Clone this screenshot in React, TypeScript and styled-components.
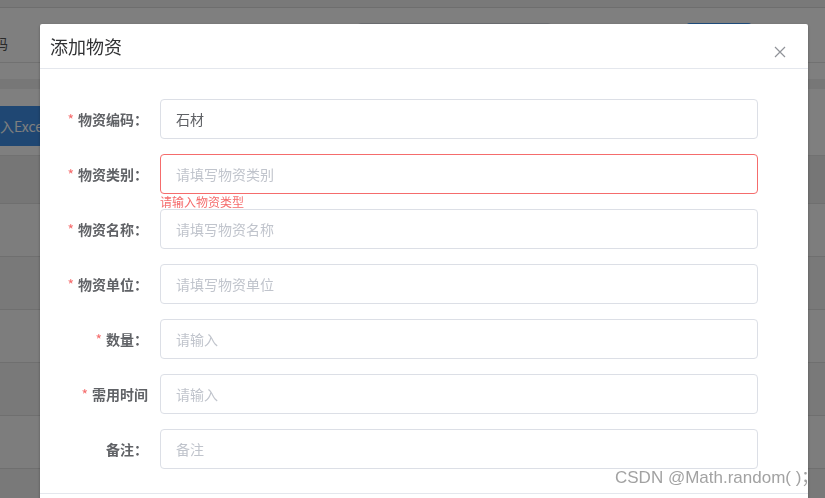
import React from "react";
import styled, { createGlobalStyle } from "styled-components";

const GlobalStyle = createGlobalStyle`
  html, body {
    margin: 0;
    padding: 0;
    height: 100%;
    overflow: hidden;
  }
  body {
    font-family: "Noto Sans CJK SC", "Noto Sans", sans-serif;
    background: #ffffff;
  }
  * {
    box-sizing: border-box;
  }
`;

/* ---------- page behind the modal ---------- */

const Page = styled.div`
  height: 100vh;
  background: #ffffff;
  overflow: hidden;
`;

const TopStrip = styled.div`
  height: 8px;
  background: #f3f3f3;
  border-bottom: 1px solid #dcdcdc;
`;

const SearchRow = styled.div`
  display: flex;
  align-items: flex-start;
  height: 55px;
  padding-top: 15px;
  border-bottom: 1px solid #e2e2e2;
`;

const SearchLabel = styled.span`
  margin-left: -20px;
  width: 28px;
  line-height: 40px;
  font-size: 14px;
  color: #555;
  white-space: nowrap;
`;

const SearchInput = styled.div`
  margin-left: 349px;
  width: 195px;
  height: 40px;
  border: 1px solid #dcdfe6;
  border-radius: 4px;
`;

const SearchButton = styled.div`
  margin-left: 134px;
  width: 66px;
  height: 40px;
  border-radius: 4px;
  background: #409eff;
`;

const Spacer = styled.div`
  height: 16px;
`;

const GrayBand = styled.div`
  height: 10px;
  background: #eeeeee;
`;

const Toolbar = styled.div`
  display: flex;
  align-items: flex-start;
  height: 67px;
  padding-top: 17px;
  border-bottom: 1px solid #e2e2e2;
`;

const PrimaryButton = styled.div`
  margin-left: -34px;
  height: 40px;
  padding: 0 20px;
  line-height: 40px;
  border-radius: 4px;
  background: #3f8fe6;
  color: #ffffff;
  font-family: "Noto Sans CJK SC", "Open Sans", sans-serif;
  font-size: 14px;
  white-space: nowrap;
`;

const TableHead = styled.div`
  height: 48px;
  background: #ececec;
  border-bottom: 1px solid #dedede;
`;

const TableRow = styled.div<{ $striped: boolean }>`
  height: 53px;
  background: ${(p) => (p.$striped ? "#f2f2f2" : "#fafafa")};
  border-bottom: 1px solid #dedede;
`;

/* ---------- modal ---------- */

const Mask = styled.div`
  position: fixed;
  inset: 0;
  background: rgba(0, 0, 0, 0.5);
  overflow: hidden;
`;

const Dialog = styled.div`
  position: relative;
  margin: 24px 0 0 40px;
  width: 768px;
  background: #ffffff;
  border-radius: 2px;
  box-shadow: 0 1px 3px rgba(0, 0, 0, 0.3);
`;

const DialogHeader = styled.div`
  height: 45px;
  padding: 10px;
  border-bottom: 1px solid #e4e7ed;
`;

const DialogTitle = styled.div`
  height: 24px;
  font-size: 18px;
  line-height: 24px;
  color: #303133;
`;

const CloseButton = styled.button`
  position: absolute;
  top: 20px;
  right: 20px;
  width: 16px;
  height: 16px;
  padding: 0;
  border: none;
  background: transparent;
  display: flex;
  align-items: center;
  justify-content: center;
  cursor: pointer;
`;

const DialogBody = styled.div`
  padding: 30px 50px 9px 20px;
`;

const FormItem = styled.div`
  display: flex;
  height: 40px;
  margin-bottom: 15px;
`;

const Label = styled.label<{ $required: boolean }>`
  width: 100px;
  flex-shrink: 0;
  padding-right: 12px;
  text-align: right;
  line-height: 40px;
  font-size: 14px;
  font-weight: bold;
  color: #606266;
  white-space: nowrap;

  &::before {
    content: ${(p) => (p.$required ? '"*"' : '""')};
    color: #f56c6c;
    margin-right: 4px;
    font-weight: normal;
  }
`;

const Content = styled.div`
  position: relative;
  flex: 1;
`;

const Input = styled.input<{ $error: boolean }>`
  display: block;
  width: 100%;
  height: 40px;
  padding: 0 15px;
  border: 1px solid ${(p) => (p.$error ? "#f56c6c" : "#dcdfe6")};
  border-radius: 4px;
  outline: none;
  font-family: "Noto Sans CJK SC", sans-serif;
  font-size: 14px;
  color: #606266;
  background: #ffffff;

  &::placeholder {
    color: #c0c4cc;
  }
`;

const ErrorText = styled.div`
  position: absolute;
  top: 100%;
  left: 0;
  padding-top: 2px;
  font-size: 12px;
  line-height: 1;
  color: #f56c6c;
  white-space: nowrap;
`;

const DialogFooter = styled.div`
  height: 40px;
  border-top: 1px solid #e4e7ed;
`;

const Watermark = styled.div`
  position: fixed;
  left: 615px;
  top: 468px;
  font-family: "Liberation Sans", "Noto Sans CJK SC", sans-serif;
  font-size: 17px;
  line-height: 20px;
  color: #a2a2a2;
  white-space: nowrap;
  pointer-events: none;
`;

type Field = {
  label: string;
  placeholder: string;
  value?: string;
  required: boolean;
  error?: string;
};

const fields: Field[] = [
  { label: "物资编码：", placeholder: "请填写物资编码", value: "石材", required: true },
  { label: "物资类别：", placeholder: "请填写物资类别", required: true, error: "请输入物资类型" },
  { label: "物资名称：", placeholder: "请填写物资名称", required: true },
  { label: "物资单位：", placeholder: "请填写物资单位", required: true },
  { label: "数量：", placeholder: "请输入", required: true },
  { label: "需用时间", placeholder: "请输入", required: true },
  { label: "备注：", placeholder: "备注", required: false },
];

const App = () => {
  return (
    <>
      <GlobalStyle />
      <Page>
        <TopStrip />
        <SearchRow>
          <SearchLabel>编码</SearchLabel>
          <SearchInput />
          <SearchButton />
        </SearchRow>
        <Spacer />
        <GrayBand />
        <Toolbar>
          <PrimaryButton>导入Excel</PrimaryButton>
        </Toolbar>
        <TableHead />
        {[0, 1, 2, 3, 4, 5].map((i) => (
          <TableRow key={i} $striped={i % 2 === 1} />
        ))}
      </Page>

      <Mask>
        <Dialog>
          <DialogHeader>
            <DialogTitle>添加物资</DialogTitle>
          </DialogHeader>
          <CloseButton aria-label="关闭">
            <svg width="12" height="12" viewBox="0 0 12 12">
              <path d="M1 1 L11 11 M11 1 L1 11" stroke="#909399" strokeWidth="1.2" fill="none" />
            </svg>
          </CloseButton>
          <DialogBody>
            {fields.map((f) => (
              <FormItem key={f.label}>
                <Label $required={f.required}>{f.label}</Label>
                <Content>
                  <Input
                    $error={!!f.error}
                    placeholder={f.placeholder}
                    defaultValue={f.value}
                  />
                  {f.error && <ErrorText>{f.error}</ErrorText>}
                </Content>
              </FormItem>
            ))}
          </DialogBody>
          <DialogFooter />
        </Dialog>
      </Mask>

      <Watermark>CSDN @Math.random( )；</Watermark>
    </>
  );
};

export default App;
